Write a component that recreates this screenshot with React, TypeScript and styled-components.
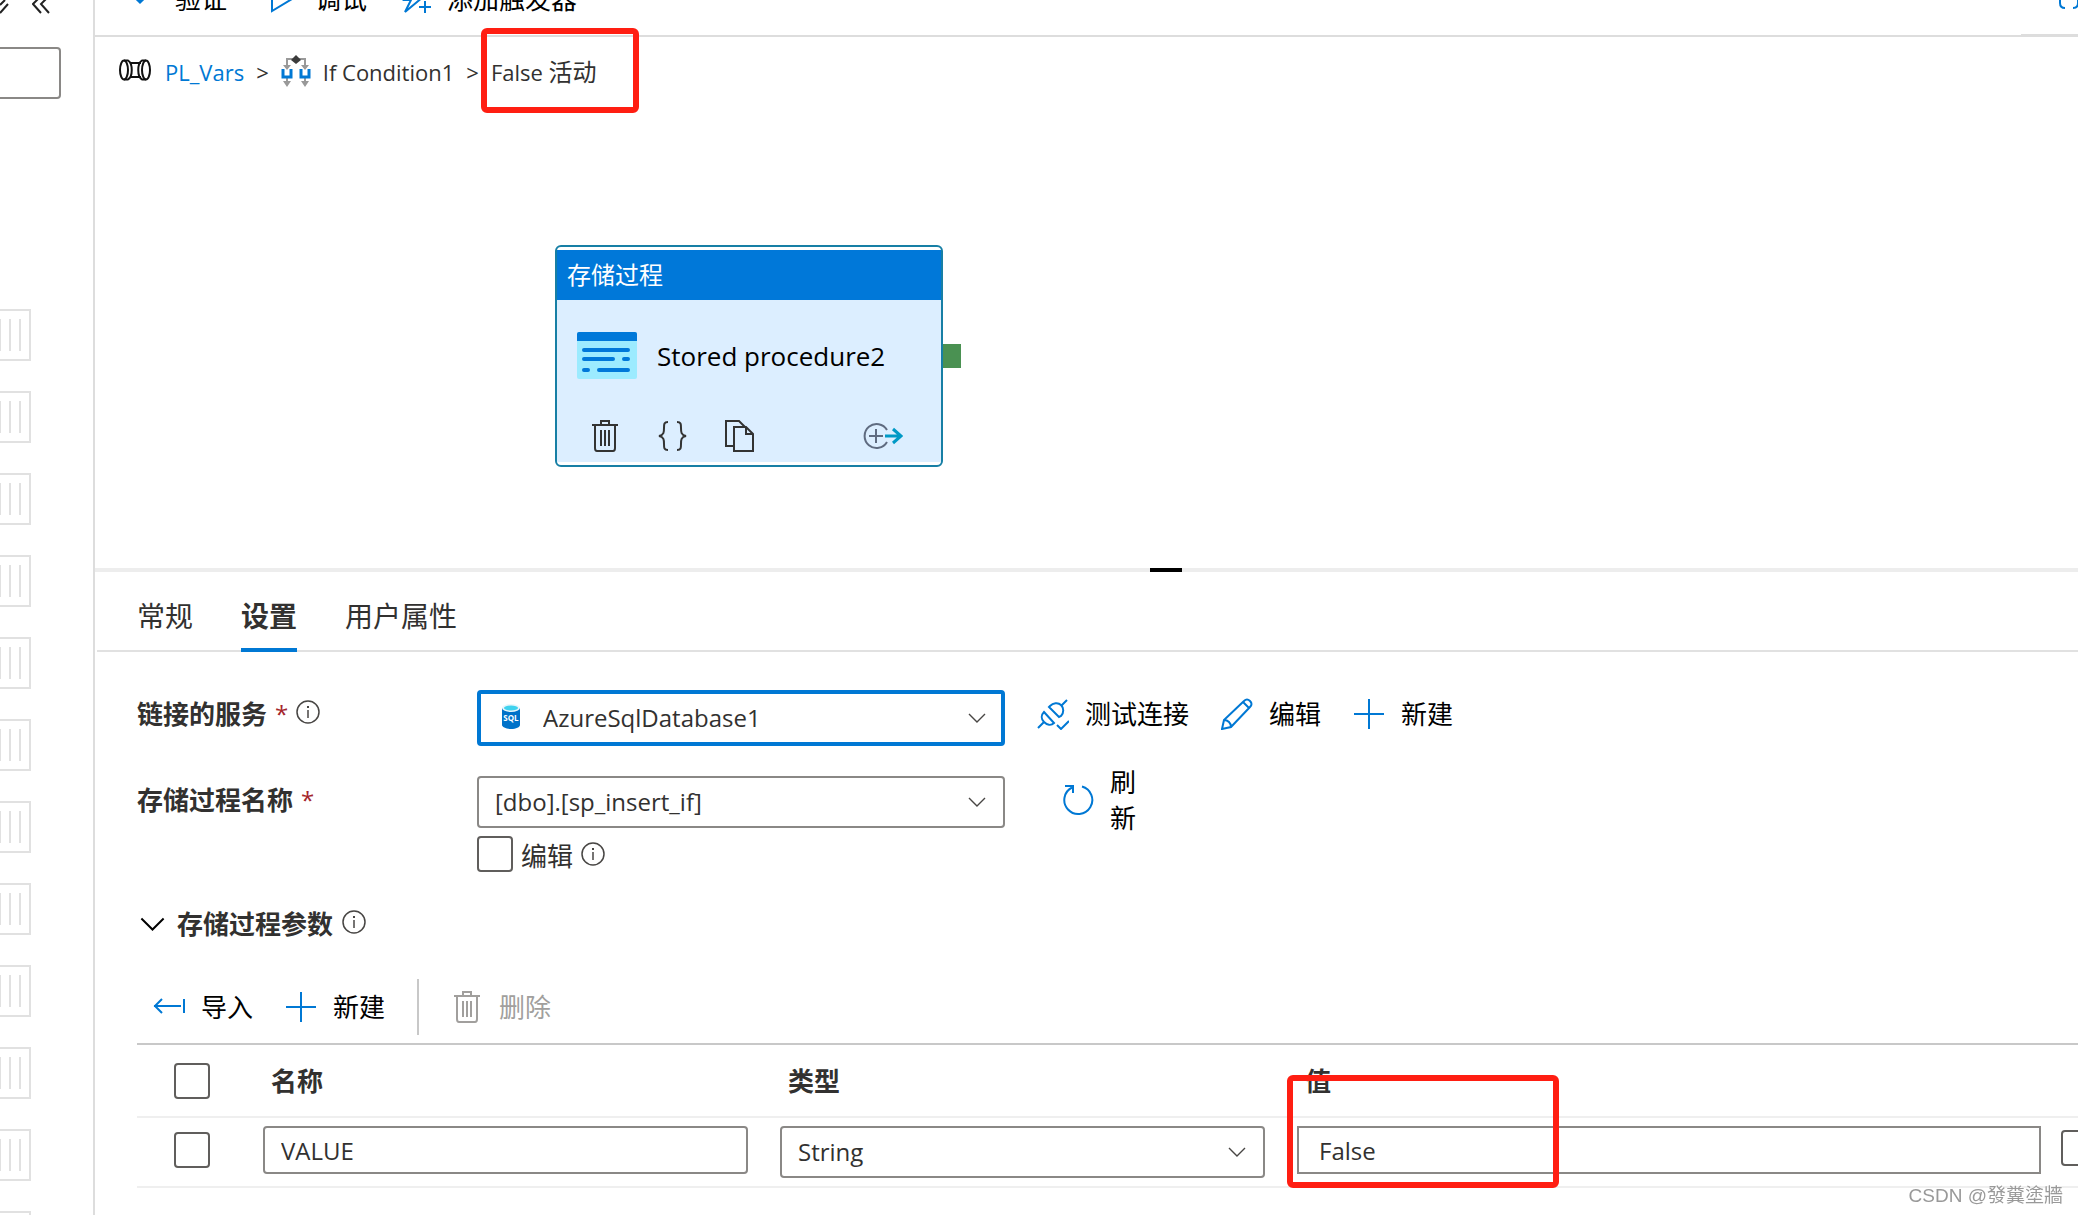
import React from "react";
import styled, { createGlobalStyle, css } from "styled-components";

const blue = "#0078d4";
const ink = "#323130";
const line = "#dddddd";

const GlobalStyle = createGlobalStyle`
  *, *::before, *::after { box-sizing: border-box; }
  body {
    margin: 0;
    background: #fff;
    color: ${ink};
    font-family: "Open Sans", "Noto Sans CJK SC", sans-serif;
    font-size: 26px;
    line-height: 36px;
  }
  button, input, select { font: inherit; color: inherit; margin: 0; }
  svg { display: block; flex: none; }
`;

const Shell = styled.div`
  display: flex;
  height: 100vh;
  overflow: hidden;
`;

/* ---------- left rail ---------- */

const Rail = styled.aside`
  flex: none;
  width: 95px;
  border-right: 2px solid ${line};
  overflow: hidden;
`;

const RailTop = styled.div`
  display: flex;
  gap: 22px;
  height: 47px;
`;

const RailButton = styled.button`
  padding: 0;
  border: 0;
  background: none;
  height: 16px;
`;

const RailSearch = styled.input`
  display: block;
  width: 61px;
  height: 52px;
  border: 2px solid #8a8886;
  border-left: 0;
  border-radius: 0 4px 4px 0;
  outline: none;
`;

const RailList = styled.ul`
  list-style: none;
  margin: 210px 0 0;
  padding: 0;
  display: grid;
  gap: 30px;
`;

const RailItem = styled.li`
  width: 31px;
  height: 52px;
  padding: 8px 0;
  border: 2px solid #e1e1e1;
  border-left: 0;
  display: flex;
  gap: 8px;
`;

const Grip = styled.span<{ $cut?: boolean }>`
  width: ${(p) => (p.$cut ? 1 : 2)}px;
  background: #e1e1e1;
`;

/* ---------- main column ---------- */

const Main = styled.main`
  flex: 1;
  min-width: 0;
  display: flex;
  flex-direction: column;
  overflow: hidden;
`;

const Toolbar = styled.header`
  flex: none;
  display: flex;
  align-items: center;
  gap: 32px;
  height: 74px;
  margin-top: -37px;
  padding: 0 0 0 32px;
  border-bottom: 2px solid ${line};
  color: #000;
`;

const ToolbarEnd = styled.div`
  align-self: stretch;
  display: flex;
  align-items: center;
  justify-content: flex-end;
  width: 57px;
  margin-left: auto;
  border-bottom: 1px solid ${line};
`;

const Command = styled.button<{ $wide?: boolean; $narrow?: boolean }>`
  display: flex;
  align-items: center;
  gap: 16px;
  padding: 0;
  margin-right: ${(p) => (p.$wide ? 8 : 0)}px;
  border: 0;
  background: none;
  color: #000;
  line-height: 36px;
  text-align: left;
  white-space: ${(p) => (p.$narrow ? "normal" : "nowrap")};
  ${(p) => p.$narrow && css`width: 74px;`}
  &:disabled { color: #a19f9d; }
`;

const Canvas = styled.section`
  position: relative;
  flex: 1;
  min-height: 0;
`;

const Breadcrumb = styled.nav`
  display: flex;
  align-items: center;
  gap: 12px;
  padding: 17px 24px;
  font-size: 22px;
`;

const Crumb = styled.a`
  color: ${blue};
  text-decoration: none;
  margin-left: 2px;
`;

const Marked = styled.span`
  position: relative;
`;

const Zh = styled.span`
  font-size: 24px;
`;

const Mark = styled.span<{ $top: number; $left: number; $w: number; $h: number }>`
  position: absolute;
  top: ${(p) => p.$top}px;
  left: ${(p) => p.$left}px;
  width: ${(p) => p.$w}px;
  height: ${(p) => p.$h}px;
  border: 6px solid #ff1e12;
  border-radius: 6px;
  pointer-events: none;
`;

const Node = styled.article`
  position: absolute;
  left: 460px;
  top: 208px;
  width: 388px;
  padding: 3px 0;
  background: #fff;
  border: 2px solid #177fa5;
  border-radius: 6px;
`;

const NodeTitle = styled.h3`
  margin: 0;
  padding: 7px 10px;
  background: #0078d9;
  color: #fff;
  font-size: 24px;
  font-weight: 400;
  line-height: 36px;
`;

const NodeBody = styled.div`
  background: #dceeff;
  padding: 32px 20px 10px;
`;

const NodeName = styled.div`
  display: flex;
  align-items: center;
  gap: 20px;
  height: 47px;
  color: #000;
`;

const NodeTools = styled.div`
  display: flex;
  gap: 35px;
  padding: 41px 18px 0 12px;
`;

const NodeTool = styled.button<{ $end?: boolean }>`
  padding: 0;
  border: 0;
  background: none;
  margin-left: ${(p) => (p.$end ? "auto" : "0")};
`;

const Port = styled.span`
  position: absolute;
  left: 386px;
  top: 97px;
  width: 18px;
  height: 24px;
  background: #4a9152;
`;

const Splitter = styled.div`
  flex: none;
  display: flex;
  justify-content: center;
  height: 4px;
  padding-left: 8%;
  background: #ededed;
`;

const SplitHandle = styled.span`
  width: 32px;
  background: #000;
`;

/* ---------- settings panel ---------- */

const Panel = styled.section`
  flex: none;
  padding-bottom: 27px;
  overflow: hidden;
`;

const Tabs = styled.div`
  display: flex;
  gap: 48px;
  height: 80px;
  margin-left: 2px;
  padding-left: 40px;
  border-bottom: 2px solid #e1e1e1;
`;

const Tab = styled.button<{ $active?: boolean }>`
  height: 80px;
  padding: 26px 0 14px;
  border: 0;
  border-bottom: 4px solid ${(p) => (p.$active ? blue : "transparent")};
  background: none;
  font-size: 28px;
  font-weight: ${(p) => (p.$active ? 700 : 400)};
`;

const Content = styled.div`
  padding: 38px 0 0 42px;
`;

const Field = styled.div`
  display: grid;
  grid-template-columns: 340px 528px 1fr;
  align-items: start;
  margin-bottom: 30px;
`;

const LabelCell = styled.div`
  display: flex;
  align-items: center;
  height: 48px;
`;

const Label = styled.label`
  font-weight: 700;
`;

const Star = styled.span`
  margin: 0 8px;
  color: #a4262c;
  font-size: 24px;
`;

const SelectBox = styled.div`
  position: relative;
  display: grid;
`;

const Select = styled.select<{ $focus?: boolean; $icon?: boolean }>`
  appearance: none;
  width: 100%;
  height: ${(p) => (p.$focus ? 56 : 52)}px;
  padding: 0 48px 0 ${(p) => (p.$icon ? 62 : 16)}px;
  border: ${(p) => (p.$focus ? `4px solid ${blue}` : "2px solid #8a8886")};
  border-radius: 4px;
  outline: none;
  background: #fff;
  font-size: 24px;
`;

const SelectArrow = styled.span`
  position: absolute;
  right: 19px;
  top: 0;
  bottom: 0;
  display: flex;
  align-items: center;
  pointer-events: none;
`;

const SelectIcon = styled(SelectArrow)`
  right: auto;
  left: 24px;
  bottom: 4px;
`;

const Actions = styled.div<{ $indent: number }>`
  display: flex;
  align-items: center;
  gap: 32px;
  height: 48px;
  padding-left: ${(p) => p.$indent}px;
`;

const CheckLine = styled.div`
  display: flex;
  align-items: flex-start;
  gap: 8px;
  margin-top: 8px;
`;

const Check = styled.input.attrs({ type: "checkbox" })`
  appearance: none;
  display: block;
  flex: none;
  width: 36px;
  height: 36px;
  border: 2px solid #605e5c;
  border-radius: 4px;
  background: #fff;
`;

const CheckLabel = styled.label`
  padding-top: 2px;
`;

const InfoMark = styled.span`
  display: flex;
  align-items: center;
  height: 36px;
  padding-bottom: 4px;
`;

const LineInfo = styled(InfoMark)`
  padding-bottom: 0;
`;

const Section = styled.h4`
  display: flex;
  align-items: center;
  gap: 9px;
  margin: 32px 0 37px;
  font-size: 26px;
  font-weight: 700;
`;

const SectionToggle = styled.button`
  display: flex;
  align-items: center;
  gap: 12px;
  padding: 0 0 0 3px;
  border: 0;
  background: none;
  line-height: 36px;
`;

const TableTools = styled.div`
  display: flex;
  align-items: center;
  gap: 32px;
  height: 56px;
  margin-bottom: 8px;
  padding-left: 16px;
`;

const Divider = styled.span`
  align-self: stretch;
  width: 2px;
  background: #c8c8c8;
`;

const Table = styled.table`
  width: 100%;
  table-layout: fixed;
  border-spacing: 0;
  border-top: 2px solid #c8c8c8;
`;

const Col = styled.col<{ $w?: number }>`
  ${(p) => p.$w && css`width: ${p.$w}px;`}
`;

const Th = styled.th<{ $check?: boolean }>`
  height: 73px;
  padding: 0 0 0 ${(p) => (p.$check ? 37 : 8)}px;
  border-bottom: 2px solid #efefef;
  text-align: left;
  font-weight: 700;
`;

const Td = styled.td<{ $pad?: string }>`
  height: 70px;
  padding: ${(p) => p.$pad ?? "8px 32px 8px 0"};
  border-bottom: 2px solid #efefef;
  vertical-align: top;
`;

const TextInput = styled.input<{ $square?: boolean }>`
  display: block;
  width: 100%;
  height: 48px;
  padding: 0 ${(p) => (p.$square ? 20 : 16)}px;
  border: 2px solid #8a8886;
  border-radius: ${(p) => (p.$square ? 0 : 4)}px;
  outline: none;
  background: #fff;
  font-size: 24px;
`;

const MarkHost = styled.div`
  position: relative;
`;

const Watermark = styled.div`
  position: fixed;
  right: 15px;
  bottom: 5px;
  color: #999;
  font-family: "Liberation Sans", "Noto Sans CJK TC", sans-serif;
  font-size: 19px;
  line-height: 28px;
  text-shadow: 1px 1px 0 #fff;
`;

/* ---------- icons ---------- */

type IconProps = { size?: number; children: React.ReactNode; color?: string; w?: number };

const Icon = ({ size = 32, color = blue, w = 2, children }: IconProps) => (
  <svg width={size} height={size} viewBox={`0 0 ${size} ${size}`} fill="none" stroke={color} strokeWidth={w} aria-hidden="true">
    {children}
  </svg>
);

const CheckIcon = () => <Icon w={3}><path d="M3 9l10 10L29 3" /></Icon>;
const PlayIcon = () => <Icon><path d="M5 3v25L25 16z" /></Icon>;
const TriggerIcon = () => (
  <Icon>
    <path d="M13 3h12l-7 11h6L6 29l6-12H5z" />
    <path d="M26 18v12M20 24h12" />
  </Icon>
);
const PlusIcon = () => <Icon><path d="M16 1v30M1 16h30" /></Icon>;
const PlugIcon = () => (
  <Icon>
    <path d="M1 30l6-6M24 8l6-6" />
    <path d="M7 14l10 11c-3 3-7 2-10-1s-3-7 0-10z" />
    <path d="M13 8c3-3 8-4 11-1s3 8 0 11l-2 1L12 9z" />
    <path d="M20 27l4 4 8-8" />
  </Icon>
);
const PencilIcon = () => (
  <Icon>
    <path d="M1 31l2-9L23 3c2-2 4-2 6 0s2 4 0 6L10 29zM3 22c4 0 7 3 7 7M22 4l6 6" />
  </Icon>
);
const RefreshIcon = () => (
  <Icon>
    <path d="M20 2.500A14 14 0 1 1 10 3.500M3 2h8v7" />
  </Icon>
);
const ImportIcon = () => <Icon><path d="M1 15h27M9 8l-7 7 7 7M31 8v14" /></Icon>;

const TrashIcon = ({ color = "#333", size = 32 }: { color?: string; size?: number }) => (
  <Icon color={color} size={size}>
    <path d="M3 5h26M12 5V1h8v4M6 5v23c0 2 1 3 2 3h16c1 0 2-1 2-3V5" />
    <path d="M12 10v16M16 10v16M20 10v16" />
  </Icon>
);

const BracesIcon = () => (
  <Icon color="#333">
    <path d="M12 2C8 2 8 4 8 8s0 7-5 8c5 1 5 4 5 8s0 6 4 6M21 2c4 0 4 2 4 6s0 7 5 8c-5 1-5 4-5 8s0 6-4 6" />
  </Icon>
);

const CopyIcon = () => (
  <Icon color="#333">
    <path d="M10 26H3V1h13l6 6" />
    <path d="M11 7h12l7 7v17H11zM23 7v7h7" />
  </Icon>
);

const NextIcon = () => (
  <svg width="40" height="32" viewBox="0 0 40 32" fill="none" aria-hidden="true">
    <path d="M24 10a12 12 0 1 0 0 12" stroke="#5f6b80" strokeWidth="2" />
    <path d="M13 9v14M6 16h14" stroke="#5f6b80" strokeWidth="2" />
    <path d="M22 16h15M30 9l8 7-8 7" stroke="#0099c6" strokeWidth="3" />
  </svg>
);

const InfoIcon = () => (
  <svg width="24" height="24" viewBox="0 0 24 24" fill="none" stroke="#484644" aria-label="信息" role="img">
    <circle cx="12" cy="12" r="11" strokeWidth="1.500" />
    <path d="M12 10v8" strokeWidth="1.500" />
    <path d="M12 6v2" strokeWidth="2" />
  </svg>
);

const ChevronIcon = ({ large }: { large?: boolean }) => (
  <svg width={large ? 25 : 18} height={large ? 14 : 10} viewBox="0 0 18 10" fill="none" stroke={large ? "#000" : "#484644"} strokeWidth="1.400" aria-hidden="true">
    <path d="M1 1l8 8 8-8" />
  </svg>
);

const PipelineIcon = () => (
  <svg width="32" height="26" viewBox="0 0 32 26" fill="none" stroke="#111" strokeWidth="2" aria-hidden="true">
    <ellipse cx="5" cy="11" rx="4" ry="9.500" />
    <path d="M5 1.500h4c5 3 5 16 0 19H5M11 4h11M11 18h11" />
    <path d="M27 1.500h-4c-5 3-5 16 0 19h4" />
    <ellipse cx="27" cy="11" rx="4" ry="9.500" />
  </svg>
);

const ConditionIcon = () => (
  <svg width="30" height="34" viewBox="0 0 30 34" fill="none" aria-hidden="true">
    <path d="M6 11V4h18v7M6 22v6M24 22v6" stroke="#999" strokeWidth="2" />
    <path d="M2 10h8l-4 5zM20 10h8l-4 5zM2 26h8l-4 6zM20 26h8l-4 6z" fill="#999" />
    <path d="M15 0l5 5-5 4-5-4z" fill="#3b3b3b" />
    <path d="M2 14v8h8v-8M20 14v8h8v-8" stroke={blue} strokeWidth="3" />
  </svg>
);

const ProcedureIcon = () => (
  <svg width="60" height="47" viewBox="0 0 60 47" aria-hidden="true">
    <rect width="60" height="47" rx="2" fill="#9cebff" />
    <path d="M0 9V2q0-2 2-2h56q2 0 2 2v7z" fill="#0078d9" />
    <path d="M7 18h44M7 27h29M47 27h4M7 38h4M22 38h29" stroke="#0078d9" strokeWidth="4" strokeLinecap="round" />
  </svg>
);

const SqlIcon = () => (
  <svg width="20" height="25" viewBox="0 0 20 25" aria-hidden="true">
    <path d="M1 4v17c0 2 4 4 9 4s9-2 9-4V4z" fill="#0072c9" />
    <ellipse cx="10" cy="4" rx="9" ry="4" fill="#e8f6fb" />
    <ellipse cx="10" cy="4" rx="7" ry="2.500" fill="#3fd2ee" />
    <text x="10" y="17" textAnchor="middle" fontSize="8" fontWeight="700" fill="#fff" fontFamily="Open Sans, sans-serif">SQL</text>
  </svg>
);

const BracketIcon = () => (
  <Icon size={20}>
    <path d="M7 1C3 1 2 3 2 6v8c0 3 1 5 5 5M15 19c4 0 5-2 5-5V6" />
  </Icon>
);

/* ---------- page ---------- */

const railItems = Array.from({ length: 12 }, (_, i) => i);

export default function App() {
  return (
    <>
      <GlobalStyle />
      <Shell>
        <Rail>
          <RailTop>
            <RailButton aria-label="全部展开">
              <svg width="10" height="16" viewBox="0 0 10 16" fill="none" stroke="#222" strokeWidth="2">
                <path d="M0 5l5-5M0 13l8-9" />
              </svg>
            </RailButton>
            <RailButton aria-label="折叠">
              <svg width="18" height="16" viewBox="0 0 18 16" fill="none" stroke="#222" strokeWidth="2">
                <path d="M9-4L1 4l8 9M17-4L9 4l8 9" />
              </svg>
            </RailButton>
          </RailTop>
          <RailSearch aria-label="筛选" />
          <RailList>
            {railItems.map((i) => (
              <RailItem key={i}>
                <Grip $cut />
                <Grip />
                <Grip />
              </RailItem>
            ))}
          </RailList>
        </Rail>

        <Main>
          <Toolbar>
            <Command $wide><CheckIcon />验证</Command>
            <Command><PlayIcon />调试</Command>
            <Command><TriggerIcon />添加触发器</Command>
            <ToolbarEnd><BracketIcon /></ToolbarEnd>
          </Toolbar>

          <Canvas>
            <Breadcrumb>
              <PipelineIcon />
              <Crumb href="#pipeline">PL_Vars</Crumb>
              <span>&gt;</span>
              <ConditionIcon />
              <span>If Condition1</span>
              <span>&gt;</span>
              <Marked>
                False <Zh>活动</Zh>
                <Mark $top={-26} $left={-10} $w={158} $h={85} />
              </Marked>
            </Breadcrumb>

            <Node>
              <NodeTitle>存储过程</NodeTitle>
              <NodeBody>
                <NodeName><ProcedureIcon />Stored procedure2</NodeName>
                <NodeTools>
                  <NodeTool aria-label="删除"><TrashIcon /></NodeTool>
                  <NodeTool aria-label="代码"><BracesIcon /></NodeTool>
                  <NodeTool aria-label="克隆"><CopyIcon /></NodeTool>
                  <NodeTool aria-label="添加输出" $end><NextIcon /></NodeTool>
                </NodeTools>
              </NodeBody>
              <Port />
            </Node>
          </Canvas>

          <Splitter><SplitHandle /></Splitter>

          <Panel>
            <Tabs role="tablist">
              <Tab role="tab">常规</Tab>
              <Tab role="tab" aria-selected $active>设置</Tab>
              <Tab role="tab">用户属性</Tab>
            </Tabs>

            <Content>
              <Field>
                <LabelCell>
                  <Label htmlFor="service">链接的服务</Label>
                  <Star>*</Star>
                  <InfoMark><InfoIcon /></InfoMark>
                </LabelCell>
                <SelectBox>
                  <Select id="service" $focus $icon>
                    <option>AzureSqlDatabase1</option>
                  </Select>
                  <SelectIcon><SqlIcon /></SelectIcon>
                  <SelectArrow><ChevronIcon /></SelectArrow>
                </SelectBox>
                <Actions $indent={32}>
                  <Command><PlugIcon />测试连接</Command>
                  <Command><PencilIcon />编辑</Command>
                  <Command><PlusIcon />新建</Command>
                </Actions>
              </Field>

              <Field>
                <LabelCell>
                  <Label htmlFor="procedure">存储过程名称</Label>
                  <Star>*</Star>
                </LabelCell>
                <div>
                  <SelectBox>
                    <Select id="procedure">
                      <option>[dbo].[sp_insert_if]</option>
                    </Select>
                    <SelectArrow><ChevronIcon /></SelectArrow>
                  </SelectBox>
                  <CheckLine>
                    <Check id="edit" />
                    <CheckLabel htmlFor="edit">编辑</CheckLabel>
                    <LineInfo><InfoIcon /></LineInfo>
                  </CheckLine>
                </div>
                <Actions $indent={57}>
                  <Command $narrow><RefreshIcon />刷新</Command>
                </Actions>
              </Field>

              <Section>
                <SectionToggle><ChevronIcon large />存储过程参数</SectionToggle>
                <InfoMark><InfoIcon /></InfoMark>
              </Section>

              <TableTools>
                <Command><ImportIcon />导入</Command>
                <Command><PlusIcon />新建</Command>
                <Divider />
                <Command disabled><TrashIcon color="#a19f9d" />删除</Command>
              </TableTools>

              <Table>
                <colgroup>
                  <Col $w={126} />
                  <Col $w={517} />
                  <Col $w={517} />
                  <Col />
                  <Col $w={17} />
                </colgroup>
                <thead>
                  <tr>
                    <Th $check><Check aria-label="全选" /></Th>
                    <Th>名称</Th>
                    <Th>类型</Th>
                    <Th>值</Th>
                    <Th />
                  </tr>
                </thead>
                <tbody>
                  <tr>
                    <Td $pad="14px 0 0 37px"><Check aria-label="选择 VALUE" /></Td>
                    <Td><TextInput aria-label="名称" defaultValue="VALUE" /></Td>
                    <Td>
                      <SelectBox>
                        <Select aria-label="类型"><option>String</option></Select>
                        <SelectArrow><ChevronIcon /></SelectArrow>
                      </SelectBox>
                    </Td>
                    <Td $pad="8px 20px 8px 0">
                      <MarkHost>
                        <TextInput $square aria-label="值" defaultValue="False" />
                        <Mark $top={-51} $left={-10} $w={272} $h={113} />
                      </MarkHost>
                    </Td>
                    <Td $pad="12px 0 0 0"><Check aria-label="视为 null" /></Td>
                  </tr>
                </tbody>
              </Table>
            </Content>
          </Panel>
        </Main>
      </Shell>
      <Watermark>CSDN @發糞塗牆</Watermark>
    </>
  );
}
